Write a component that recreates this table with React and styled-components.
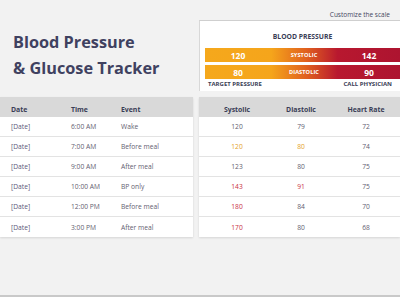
import React from "react";
import styled, { createGlobalStyle } from "styled-components";

const GlobalStyle = createGlobalStyle`
  html, body {
    margin: 0;
    padding: 0;
    background: #f2f2f2;
  }
  body {
    font-family: "Open Sans", "Noto Sans", sans-serif;
  }
`;

const Page = styled.div`
  width: 400px;
  height: 297px;
  overflow: hidden;
  background: #f2f2f2;
  display: flex;
  flex-direction: column;
  border-bottom: 2px solid #c9c9c9;
  box-sizing: border-box;
`;

const TopArea = styled.div`
  display: grid;
  grid-template-columns: 193px 207px;
  height: 97px;
`;

const TitleBox = styled.div`
  padding: 29px 0 0 13px;
`;

const Title = styled.h1`
  margin: 0;
  font-size: 16.3px;
  line-height: 26px;
  font-weight: 700;
  color: #3f4160;
`;

const ScaleColumn = styled.div`
  display: flex;
  flex-direction: column;
  padding-left: 6px;
`;

const CustomizeLink = styled.div`
  height: 20px;
  font-size: 6.5px;
  color: #44475e;
  text-align: right;
  padding-right: 10px;
  line-height: 29px;
`;

const Panel = styled.div`
  background: #fff;
  border-top: 1px solid #cfcfcf;
  border-left: 1px solid #d8d8d8;
  height: 71px;
  padding: 0 0 0 5px;
  box-sizing: border-box;
`;

const PanelTitle = styled.div`
  text-align: center;
  font-size: 6.8px;
  font-weight: 700;
  color: #3a3d56;
  padding: 11px 0 7px;
  line-height: 9px;
`;

const Bar = styled.div`
  display: grid;
  grid-template-columns: 66px 66px 64px;
  height: 14px;
  margin-bottom: 3px;
  align-items: center;
  background: linear-gradient(
    90deg,
    #f5a81c 0%,
    #f5a51b 34%,
    #e0601f 52%,
    #b8182f 68%,
    #ad1430 100%
  );
`;

const BarValue = styled.span`
  text-align: center;
  color: #fff;
  font-weight: 700;
  font-size: 8.5px;
`;

const BarLabel = styled.span`
  text-align: center;
  color: #fff;
  font-weight: 700;
  font-size: 5.6px;
  letter-spacing: 0.1px;
`;

const Legend = styled.div`
  display: flex;
  justify-content: space-between;
  font-size: 6px;
  font-weight: 700;
  color: #3a3d56;
  padding: 0 8px 0 3px;
  margin-top: -2px;
`;

const Tables = styled.div`
  display: grid;
  grid-template-columns: 193px 207px;
`;

const Table = styled.div`
  background: #fff;
  box-shadow: 0 1px 2px rgba(0, 0, 0, 0.12);
  margin-left: ${(p) => (p.$right ? "6px" : "0")};
`;

const Row = styled.div`
  display: grid;
  grid-template-columns: ${(p) => p.$cols};
  height: 20px;
  align-items: ${(p) => (p.$head ? "end" : "center")};
  padding-bottom: ${(p) => (p.$head ? "3px" : "0")};
  box-sizing: border-box;
  background: ${(p) => (p.$head ? "#d9d9d9" : "#fff")};
  border-bottom: ${(p) => (p.$head ? "none" : "1px solid #e3e3e3")};
  &:last-child {
    border-bottom: none;
  }
`;

const Cell = styled.span`
  font-size: ${(p) => (p.$head ? "6.9px" : "6.7px")};
  font-weight: ${(p) => (p.$head ? 700 : 400)};
  color: ${(p) => p.$color || (p.$head ? "#3a3d56" : "#5f6070")};
  text-align: ${(p) => (p.$center ? "center" : "left")};
  padding-left: ${(p) => p.$pad || "0"};
  white-space: nowrap;
`;

const ORANGE = "#e5a126";
const RED = "#c9303f";

const rows = [
  { time: "6:00 AM", event: "Wake", sys: 120, dia: 79, hr: 72 },
  { time: "7:00 AM", event: "Before meal", sys: 120, dia: 80, hr: 74, sc: ORANGE, dc: ORANGE },
  { time: "9:00 AM", event: "After meal", sys: 123, dia: 80, hr: 75 },
  { time: "10:00 AM", event: "BP only", sys: 143, dia: 91, hr: 75, sc: RED, dc: RED },
  { time: "12:00 PM", event: "Before meal", sys: 180, dia: 84, hr: 70, sc: RED },
  { time: "3:00 PM", event: "After meal", sys: 170, dia: 80, hr: 68, sc: RED },
];

const leftCols = "71px 50px 1fr";
const rightCols = "6px 64px 64px 66px 1fr";

export default function App() {
  return (
    <>
      <GlobalStyle />
      <Page>
        <TopArea>
          <TitleBox>
            <Title>Blood Pressure</Title>
            <Title>&amp; Glucose Tracker</Title>
          </TitleBox>
          <ScaleColumn>
            <CustomizeLink>Customize the scale</CustomizeLink>
            <Panel>
              <PanelTitle>BLOOD PRESSURE</PanelTitle>
              <Bar>
                <BarValue>120</BarValue>
                <BarLabel>SYSTOLIC</BarLabel>
                <BarValue>142</BarValue>
              </Bar>
              <Bar>
                <BarValue>80</BarValue>
                <BarLabel>DIASTOLIC</BarLabel>
                <BarValue>90</BarValue>
              </Bar>
              <Legend>
                <span>TARGET PRESSURE</span>
                <span>CALL PHYSICIAN</span>
              </Legend>
            </Panel>
          </ScaleColumn>
        </TopArea>
        <Tables>
          <Table>
            <Row $head $cols={leftCols}>
              <Cell $head $pad="11px">Date</Cell>
              <Cell $head>Time</Cell>
              <Cell $head>Event</Cell>
            </Row>
            {rows.map((r, i) => (
              <Row key={i} $cols={leftCols}>
                <Cell $pad="11px" $color="#5b5879">[Date]</Cell>
                <Cell>{r.time}</Cell>
                <Cell>{r.event}</Cell>
              </Row>
            ))}
          </Table>
          <Table $right>
            <Row $head $cols={rightCols}>
              <span />
              <Cell $head $center>Systolic</Cell>
              <Cell $head $center>Diastolic</Cell>
              <Cell $head $center>Heart Rate</Cell>
            </Row>
            {rows.map((r, i) => (
              <Row key={i} $cols={rightCols}>
                <span />
                <Cell $center $color={r.sc}>{r.sys}</Cell>
                <Cell $center $color={r.dc}>{r.dia}</Cell>
                <Cell $center>{r.hr}</Cell>
              </Row>
            ))}
          </Table>
        </Tables>
      </Page>
    </>
  );
}
